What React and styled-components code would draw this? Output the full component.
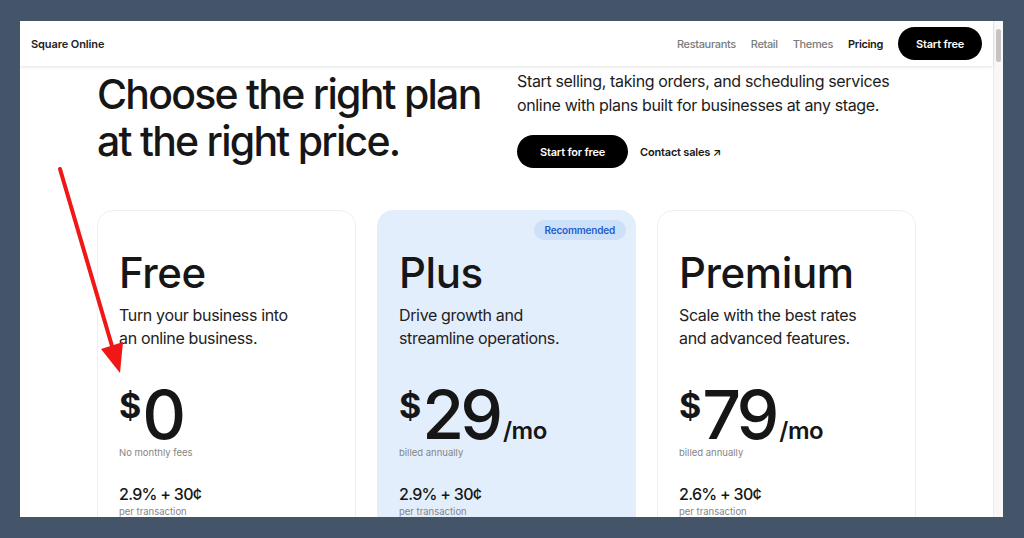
import React from "react"
import styled, { createGlobalStyle } from "styled-components"

const GlobalStyle = createGlobalStyle`
    html, body {
        margin: 0;
        padding: 0;
        background: #445569;
    }
    * {
        box-sizing: border-box;
    }
`

const Page = styled.div`
    position: relative;
    width: 1024px;
    height: 538px;
    padding: 21px 20px 0 20px;
    overflow: hidden;
    font-family: "Inter", "Liberation Sans", sans-serif;
    color: #161616;
`

const Window = styled.div`
    width: 983px;
    height: 496px;
    background: #fff;
    display: flex;
    overflow: hidden;
`

const Main = styled.div`
    flex: 1;
    display: flex;
    flex-direction: column;
`

const Header = styled.header`
    position: relative;
    z-index: 1;
    height: 45px;
    flex-shrink: 0;
    display: flex;
    align-items: center;
    justify-content: space-between;
    padding: 0 11px;
    background: #fff;
    box-shadow: 0 1px 3px rgba(0, 0, 0, 0.12);
`

const Brand = styled.div`
    font-size: 11px;
    font-weight: 600;
    letter-spacing: -0.1px;
    color: #222;
`

const Nav = styled.nav`
    display: flex;
    align-items: center;
    gap: 15px;
`

const NavLink = styled.a`
    font-size: 11px;
    font-weight: ${(p) => (p.$active ? 600 : 500)};
    color: ${(p) => (p.$active ? "#1a1a1a" : "#7b7b7b")};
    text-decoration: none;
    letter-spacing: -0.35px;
`

const PillButton = styled.button`
    height: 33px;
    padding: 0 ${(p) => p.$pad || 17}px;
    border: none;
    border-radius: 17px;
    background: #000;
    color: #fff;
    font-family: inherit;
    font-size: 11px;
    font-weight: 600;
    letter-spacing: -0.2px;
`

const Content = styled.div`
    padding: 3px 77px 0 77px;
`

const Hero = styled.section`
    display: grid;
    grid-template-columns: 420px 1fr;
`

const Headline = styled.h1`
    margin: 2px 0 0 0;
    font-size: 41px;
    line-height: 47px;
    font-weight: 500;
    letter-spacing: -1.75px;
`

const Lead = styled.p`
    margin: 0;
    font-size: 16px;
    line-height: 24px;
    letter-spacing: -0.35px;
    color: #1c1c1c;
`

const Actions = styled.div`
    display: flex;
    align-items: center;
    gap: 12px;
    margin-top: 18px;
`

const TextLink = styled.a`
    font-size: 11px;
    font-weight: 600;
    color: #161616;
    letter-spacing: -0.2px;
`

const Cards = styled.section`
    display: grid;
    grid-template-columns: repeat(3, 259px);
    gap: 21px;
    margin-top: 42px;
`

const Card = styled.div`
    position: relative;
    min-height: 340px;
    padding: 41px 22px 0 21px;
    border-radius: 16px;
    border: 1px solid ${(p) => (p.$featured ? "#e3eefd" : "#efefef")};
    background: ${(p) => (p.$featured ? "#e3eefd" : "#fff")};
`

const Badge = styled.span`
    position: absolute;
    top: 9px;
    right: 9px;
    height: 20px;
    padding: 0 11px;
    display: flex;
    align-items: center;
    border-radius: 10px;
    background: #cde0fa;
    color: #1d5ec9;
    font-size: 10px;
    font-weight: 600;
    letter-spacing: -0.2px;
`

const PlanName = styled.h2`
    margin: 0;
    font-size: 42px;
    line-height: 42px;
    font-weight: 500;
    letter-spacing: -0.4px;
`

const PlanText = styled.p`
    margin: 10px 0 0 0;
    font-size: 16px;
    line-height: 23px;
    letter-spacing: -0.35px;
    color: #222;
`

const PriceRow = styled.div`
    display: flex;
    align-items: baseline;
    margin-top: 35px;
    height: 58px;
`

const Dollar = styled.span`
    align-self: flex-start;
    margin-top: 4px;
    font-size: 34px;
    line-height: 34px;
    font-weight: 700;
`

const Amount = styled.span`
    font-size: 68px;
    line-height: 58px;
    font-weight: 500;
    letter-spacing: -4px;
    margin-left: 1px;
`

const Per = styled.span`
    font-size: 24px;
    line-height: 24px;
    font-weight: 600;
    letter-spacing: -0.5px;
    margin-left: 4px;
`

const Note = styled.div`
    margin-top: ${(p) => p.$top || 0}px;
    font-size: 9.5px;
    line-height: 12px;
    color: #858585;
`

const Fee = styled.div`
    margin-top: 25px;
    font-size: 16px;
    line-height: 20px;
    font-weight: 500;
    letter-spacing: -0.7px;
`

const ScrollTrack = styled.div`
    width: 10px;
    flex-shrink: 0;
    background: #f8f8f8;
    border-left: 1px solid #ececec;
    padding: 8px 0 0 2px;
`

const Thumb = styled.div`
    width: 5px;
    height: 33px;
    border-radius: 3px;
    background: #c4c4c4;
`

const Overlay = styled.svg`
    position: absolute;
    inset: 0;
    pointer-events: none;
`

const plans = [
    {
        name: "Free",
        text: ["Turn your business into", "an online business."],
        amount: "0",
        note: "No monthly fees",
        fee: "2.9% + 30¢",
    },
    {
        name: "Plus",
        text: ["Drive growth and", "streamline operations."],
        amount: "29",
        per: "/mo",
        note: "billed annually",
        fee: "2.9% + 30¢",
        featured: true,
    },
    {
        name: "Premium",
        text: ["Scale with the best rates", "and advanced features."],
        amount: "79",
        per: "/mo",
        note: "billed annually",
        fee: "2.6% + 30¢",
    },
]

const App = () => (
    <Page>
        <GlobalStyle />
        <Window>
            <Main>
                <Header>
                    <Brand>Square Online</Brand>
                    <Nav>
                        <NavLink>Restaurants</NavLink>
                        <NavLink>Retail</NavLink>
                        <NavLink>Themes</NavLink>
                        <NavLink $active>Pricing</NavLink>
                        <PillButton $pad={18}>Start free</PillButton>
                    </Nav>
                </Header>
                <Content>
                    <Hero>
                        <Headline>
                            Choose the right plan
                            <br />
                            at the right price.
                        </Headline>
                        <div>
                            <Lead>
                                Start selling, taking orders, and scheduling services
                                <br />
                                online with plans built for businesses at any stage.
                            </Lead>
                            <Actions>
                                <PillButton $pad={23}>Start for free</PillButton>
                                <TextLink>Contact sales ↗</TextLink>
                            </Actions>
                        </div>
                    </Hero>
                    <Cards>
                        {plans.map((plan) => (
                            <Card key={plan.name} $featured={plan.featured}>
                                {plan.featured && <Badge>Recommended</Badge>}
                                <PlanName>{plan.name}</PlanName>
                                <PlanText>
                                    {plan.text[0]}
                                    <br />
                                    {plan.text[1]}
                                </PlanText>
                                <PriceRow>
                                    <Dollar>$</Dollar>
                                    <Amount>{plan.amount}</Amount>
                                    {plan.per && <Per>{plan.per}</Per>}
                                </PriceRow>
                                <Note $top={4}>{plan.note}</Note>
                                <Fee>{plan.fee}</Fee>
                                <Note $top={2}>per transaction</Note>
                            </Card>
                        ))}
                    </Cards>
                </Content>
            </Main>
            <ScrollTrack>
                <Thumb />
            </ScrollTrack>
        </Window>
        <Overlay width="1024" height="538" viewBox="0 0 1024 538">
            <line x1="60" y1="169" x2="112" y2="346" stroke="#f01717" strokeWidth="4" strokeLinecap="round" />
            <polygon points="101,349 123,342 120,373" fill="#f01717" />
        </Overlay>
    </Page>
)

export default App
